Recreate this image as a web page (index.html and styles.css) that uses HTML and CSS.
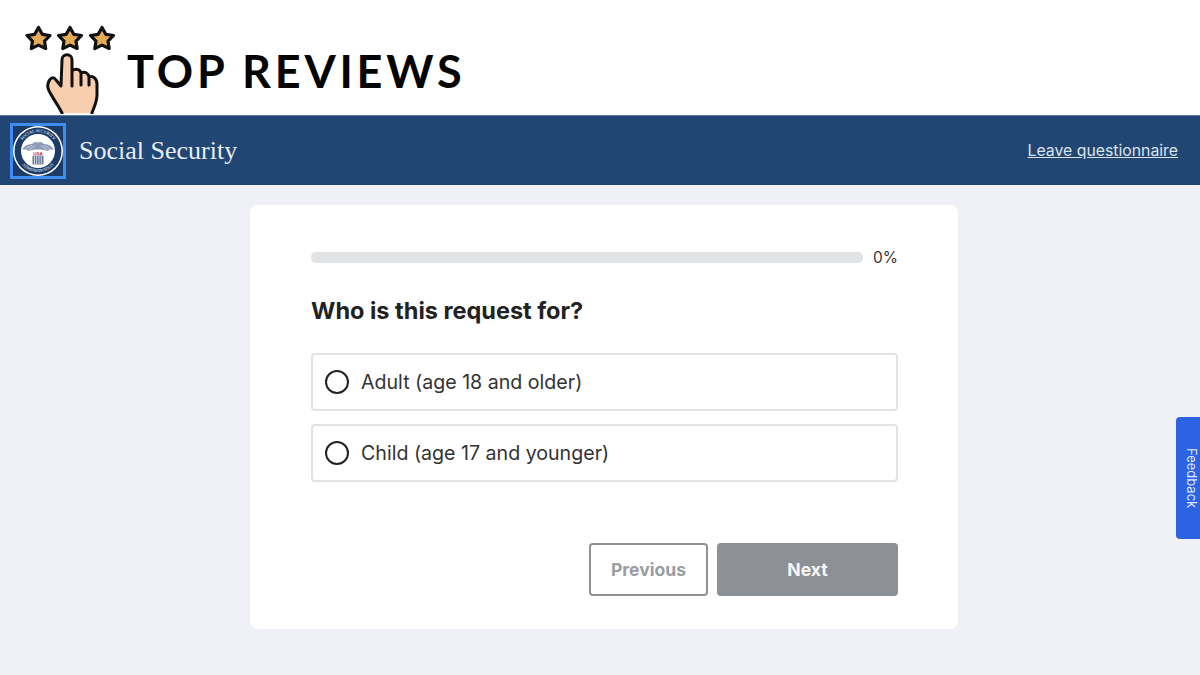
FILE: index.html
```html
<!DOCTYPE html>
<html lang="en">
<head>
    <meta charset="UTF-8">
    <title>Social Security questionnaire</title>
    <link rel="stylesheet" href="styles.css">
</head>
<body>
    <header class="brand">
        <svg class="brand-icon" viewBox="25 24 92 90" width="92" height="90" aria-hidden="true">
            <defs>
                <linearGradient id="starFill" x1="0" x2="1" y1="0" y2="0">
                    <stop offset="0" stop-color="#efb045"/>
                    <stop offset="1" stop-color="#d8a768"/>
                </linearGradient>
                <path id="star" d="M0 -11 L3.8 -4.2 L11.5 -3 L6 2.6 L7.2 10 L0 6.6 L-7.2 10 L-6 2.6 L-11.5 -3 L-3.8 -4.2 Z"/>
            </defs>
            <g fill="url(#starFill)" stroke="#111" stroke-width="3.2" stroke-linejoin="round">
                <use href="#star" x="38.5" y="38.5"/>
                <use href="#star" x="70" y="38.5"/>
                <use href="#star" x="102" y="38.5"/>
            </g>
            <path d="M62 113 C58 105 54 100 52 96 C49 91 46 87 49 81 C51 77 54 77 56 80 L61 86 L62 60 C62 53 72 53 72 60 L72 71 C75 68 80 69 81 73 C85 71 88 73 89 77 C93 75 97 79 97 84 L97 95 C97 102 94 107 92 113 Z" fill="#f8cfae"/>
            <path d="M62 113 C58 105 54 100 52 96 C49 91 46 87 49 81 C51 77 54 77 56 80 L61 86 L62 60 C62 53 72 53 72 60 L72 71 C75 68 80 69 81 73 C85 71 88 73 89 77 C93 75 97 79 97 84 L97 95 C97 102 94 107 92 113 M72 71 L72 86 M81 73 L81 85 M89 77 L89 85" fill="none" stroke="#111" stroke-width="3" stroke-linecap="round" stroke-linejoin="round"/>
        </svg>
        <span class="brand-name">TOP REVIEWS</span>
    </header>

    <nav class="topbar">
        <a class="seal-link" href="#">
            <svg viewBox="0 0 50 50" width="50" height="50" aria-hidden="true">
                <defs>
                    <path id="ringTop" d="M6 25 A19 19 0 0 1 44 25"/>
                    <path id="ringBottom" d="M4 25 A21 21 0 0 0 46 25"/>
                </defs>
                <circle cx="25" cy="25" r="25" fill="#fff"/>
                <circle cx="25" cy="25" r="23.5" fill="#1d3b68"/>
                <circle cx="25" cy="25" r="17" fill="#fff"/>
                <text class="seal-ring"><textPath href="#ringTop" startOffset="50%">SOCIAL SECURITY</textPath></text>
                <text class="seal-ring"><textPath href="#ringBottom" startOffset="50%">ADMINISTRATION</textPath></text>
                <path d="M25 16.5 C22 15 20 17 19 18 C15 18 11 20 9 24 C12 23 14 24 16 25 C18 24 21 23.5 25 23.5 C29 23.5 32 24 34 25 C36 24 38 23 41 24 C39 20 35 18 31 18 C30 17 28 15 25 16.5 Z" fill="#8c9bb6"/>
                <path d="M13 23 L19 19 M16 24 L22 19.5 M37 23 L31 19 M34 24 L28 19.5" stroke="#fff" stroke-width="0.5"/>
                <text class="seal-usa" x="25" y="28.5">USA</text>
                <rect x="19.5" y="29.5" width="11" height="9" rx="1" fill="#66779a"/>
                <path d="M21.5 29.5 V38.5 M23.7 29.5 V38.5 M26 29.5 V38.5 M28.3 29.5 V38.5" stroke="#fff" stroke-width="0.7"/>
            </svg>
        </a>
        <span class="agency">Social Security</span>
        <a class="leave" href="#">Leave questionnaire</a>
    </nav>

    <main class="page">
        <section class="card">
            <div class="progress">
                <div class="progress-track"></div>
                <span class="progress-label">0%</span>
            </div>
            <h1 class="question">Who is this request for?</h1>
            <div class="options">
                <label class="option"><span class="radio"></span>Adult (age 18 and older)</label>
                <label class="option"><span class="radio"></span>Child (age 17 and younger)</label>
            </div>
            <div class="actions">
                <button class="btn btn-prev">Previous</button>
                <button class="btn btn-next">Next</button>
            </div>
        </section>
    </main>

    <a class="feedback" href="#">Feedback</a>
</body>
</html>
```

FILE: styles.css
```css
* {
    box-sizing: border-box;
}
html, body {
    height: 100%;
}
body {
    margin: 0;
    display: flex;
    flex-direction: column;
    overflow: hidden;
    font-family: Inter, "Liberation Sans", sans-serif;
    background: #f0f1f6;
    color: #222;
}
.brand {
    height: 115px;
    flex: none;
    background: #fff;
    display: flex;
    align-items: flex-start;
    padding: 24px 0 0 25px;
}
.brand-icon {
    flex: none;
}
.brand-name {
    margin: 17px 0 0 10px;
    font-family: Lato, "Liberation Sans", sans-serif;
    font-size: 45px;
    line-height: 60px;
    font-weight: 700;
    letter-spacing: 3.8px;
    color: #050505;
}
.topbar {
    height: 70px;
    flex: none;
    background: #214673;
    border-top: 1px solid #5f7ea3;
    display: flex;
    align-items: center;
    padding: 0 22px 0 10px;
}
.seal-link {
    width: 56px;
    height: 56px;
    flex: none;
    background: #1d3b68;
    border: 3px solid #3f8cf0;
    display: flex;
    align-items: center;
    justify-content: center;
}
.seal-ring {
    font-family: "Liberation Serif", serif;
    font-size: 4.2px;
    fill: #fff;
    text-anchor: middle;
}
.seal-usa {
    font-family: "Liberation Sans", sans-serif;
    font-size: 4.4px;
    font-weight: 700;
    fill: #d2293a;
    text-anchor: middle;
}
.agency {
    margin-left: 13px;
    font-family: "Liberation Serif", serif;
    font-size: 26px;
    color: #e8edf3;
}
.leave {
    margin-left: auto;
    font-size: 15.8px;
    color: #dbe3ee;
}
.page {
    flex: 1;
    display: flex;
    justify-content: center;
    align-items: flex-start;
    padding: 20px 0 0 8px;
}
.card {
    width: 708px;
    height: 424px;
    background: #fff;
    border-radius: 8px;
    padding: 46px 60px 33px 61px;
    display: flex;
    flex-direction: column;
}
.progress {
    display: flex;
    align-items: center;
    gap: 10px;
    height: 12px;
}
.progress-track {
    flex: 1;
    height: 11px;
    border-radius: 5px;
    background: #e1e2e3;
}
.progress-label {
    font-size: 15.5px;
    color: #333;
}
.question {
    margin: 32px 0 0;
    font-size: 23.5px;
    line-height: 32px;
    font-weight: 700;
    color: #222;
}
.options {
    margin-top: 26px;
    display: flex;
    flex-direction: column;
    gap: 13px;
}
.option {
    height: 58px;
    border: 2px solid #e2e3e5;
    border-radius: 4px;
    display: flex;
    align-items: center;
    gap: 12px;
    padding-left: 12px;
    font-size: 19.6px;
    color: #333;
}
.radio {
    width: 24px;
    height: 24px;
    flex: none;
    border: 2px solid #222;
    border-radius: 50%;
}
.actions {
    margin-top: auto;
    display: flex;
    justify-content: flex-end;
    gap: 9px;
}
.btn {
    height: 53px;
    border-radius: 4px;
    font-family: inherit;
    font-size: 17.6px;
    font-weight: 700;
}
.btn-prev {
    width: 119px;
    background: #fff;
    border: 2px solid #8f9297;
    color: #9a9da2;
}
.btn-next {
    width: 181px;
    background: #8d9095;
    border: none;
    color: #f6f6f7;
}
.feedback {
    position: absolute;
    right: 0;
    top: 417px;
    width: 24px;
    height: 122px;
    background: #2d63e2;
    border-radius: 4px 0 0 4px;
    color: #dfe8fb;
    font-size: 13px;
    text-decoration: none;
    writing-mode: vertical-rl;
    text-align: center;
    line-height: 16px;
}
```
